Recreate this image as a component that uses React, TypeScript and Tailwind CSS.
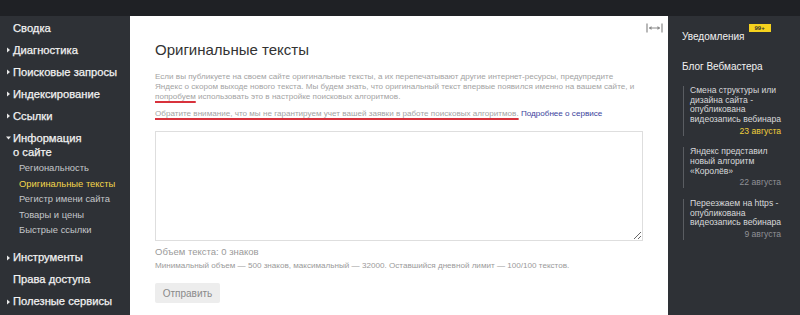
import React from "react";

const font = { fontFamily: '"Liberation Sans", Arial, sans-serif' };

function Tri({ down = false }: { down?: boolean }) {
  return (
    <svg width="5" height="6" viewBox="0 0 5 6" className="shrink-0">
      {down ? <path d="M0 1.5 L5 1.5 L2.5 4.5 Z" fill="#e8e8e8" /> : <path d="M1 0.5 L4 3 L1 5.5 Z" fill="#e8e8e8" />}
    </svg>
  );
}

function MainItem({ label, arrow = true }: { label: string; arrow?: boolean }) {
  return (
    <div className="h-[22px] flex items-center pl-[6px] gap-[2px] text-[11.2px] text-[#f2f2f2] [-webkit-text-stroke:0.25px_#f2f2f2]">
      <span className="w-[5px] flex">{arrow ? <Tri /> : null}</span>
      <span>{label}</span>
    </div>
  );
}

function SubItem({ label, active = false }: { label: string; active?: boolean }) {
  return (
    <div className={`pl-[19px] text-[9.4px] leading-[15.5px] ${active ? "text-[#f3d64b]" : "text-[#c4c6c9]"}`}>{label}</div>
  );
}

function BlogItem({ lines, date, hot = false }: { lines: string[]; date: string; hot?: boolean }) {
  return (
    <div className="ml-[15px] mr-[19px] border-l border-[#5a5d62] pl-[6px]">
      <div className="text-[8.6px] leading-[9.7px] text-[#d8d9db]">
        {lines.map((l, i) => (
          <div key={i} className="whitespace-nowrap">{l}</div>
        ))}
      </div>
      <div className={`text-right text-[8.6px] leading-[9.5px] mt-[2px] ${hot ? "text-[#f0cf3c]" : "text-[#8e9095]"}`}>{date}</div>
    </div>
  );
}

export default function App() {
  return (
    <div className="w-[800px] h-[315px] overflow-hidden bg-[#2e3136] flex flex-col" style={font}>
      <div className="h-[16px] bg-[#1f2125] shrink-0" />
      <div className="flex flex-1 min-h-0">
        {/* Sidebar */}
        <div className="w-[130px] shrink-0 bg-[#2e3136] pt-[1px]">
          <MainItem label="Сводка" arrow={false} />
          <MainItem label="Диагностика" />
          <MainItem label="Поисковые запросы" />
          <MainItem label="Индексирование" />
          <MainItem label="Ссылки" />
          <div className="pt-[4px] pl-[6px] flex gap-[2px] text-[11.2px] leading-[14px] text-[#f2f2f2] [-webkit-text-stroke:0.25px_#f2f2f2]">
            <span className="w-[5px] pt-[4px] flex items-start"><Tri down /></span>
            <span>Информация<br />о сайте</span>
          </div>
          <div className="pt-[1px]">
            <SubItem label="Региональность" />
            <SubItem label="Оригинальные тексты" active />
            <SubItem label="Регистр имени сайта" />
            <SubItem label="Товары и цены" />
            <SubItem label="Быстрые ссылки" />
          </div>
          <div className="mt-[9px]">
            <MainItem label="Инструменты" />
            <MainItem label="Права доступа" arrow={false} />
            <MainItem label="Полезные сервисы" />
          </div>
        </div>

        {/* Content */}
        <div className="w-[538px] shrink-0 bg-white relative px-[25px] pt-[24px]">
          <div className="absolute right-[5px] top-[7px]">
            <svg width="17" height="10" viewBox="0 0 17 10">
              <path d="M1 0.5 V9.5 M16 0.5 V9.5" stroke="#8a8a8a" strokeWidth="1.2" />
              <path d="M3 5 H14" stroke="#8a8a8a" strokeWidth="1" />
              <path d="M3 5 L5.5 3 V7 Z M14 5 L11.5 3 V7 Z" fill="#8a8a8a" />
            </svg>
          </div>
          <h1 className="text-[15px] leading-[20px] text-[#333]">Оригинальные тексты</h1>
          <div className="mt-[12px] text-[8.1px] leading-[10px] text-[#a3a3a3] whitespace-nowrap">
            <div>Если вы публикуете на своем сайте оригинальные тексты, а их перепечатывают другие интернет-ресурсы, предупредите</div>
            <div>Яндекс о скором выходе нового текста. Мы будем знать, что оригинальный текст впервые появился именно на вашем сайте, и</div>
            <div>
              <span className="underline decoration-[#d8323c] decoration-2 underline-offset-[2px]">попробуем</span> использовать это в настройке поисковых алгоритмов.
            </div>
          </div>
          <div className="mt-[7px] text-[8.1px] leading-[9px] whitespace-nowrap">
            <span className="text-[#a3a3a3] underline decoration-[#d8323c] decoration-2 underline-offset-[2px]">Обратите внимание, что мы не гарантируем учет вашей заявки в работе поисковых алгоритмов.</span>{" "}
            <span className="text-[#3a3f9c]">Подробнее о сервисе</span>
          </div>
          <textarea className="mt-[13px] block w-[488px] h-[110px] border border-[#dedede] resize-y outline-none" />
          <div className="mt-[5px] text-[9.5px] leading-[12px] text-[#9a9a9a]">Объем текста: 0 знаков</div>
          <div className="mt-[2px] text-[8.1px] leading-[12px] text-[#9a9a9a] whitespace-nowrap">
            Минимальный объем — 500 знаков, максимальный — 32000. Оставшийся дневной лимит — 100/100 текстов.
          </div>
          <button className="mt-[11px] w-[65px] h-[20px] bg-[#ededed] text-[10px] text-[#8a8a8a] rounded-[2px]">Отправить</button>
        </div>

        {/* Right panel */}
        <div className="flex-1 bg-[#2e3136] pt-[8px]">
          <div className="pl-[14px] flex items-start">
            <span className="mt-[6px] text-[10px] leading-[13px] text-[#f2f2f2]">Уведомления</span>
            <span className="ml-[4px] h-[8px] px-[6px] bg-[#f5d21e] text-[6px] leading-[8px] font-bold text-[#333]">99+</span>
          </div>
          <div className="pl-[14px] mt-[17px] text-[10px] leading-[13px] text-[#f2f2f2]">Блог Вебмастера</div>
          <div className="mt-[13px] flex flex-col gap-[11px]">
            <BlogItem lines={["Смена структуры или", "дизайна сайта -", "опубликована", "видеозапись вебинара"]} date="23 августа" hot />
            <BlogItem lines={["Яндекс представил", "новый алгоритм", "«Королёв»"]} date="22 августа" />
            <BlogItem lines={["Переезжаем на https -", "опубликована", "видеозапись вебинара"]} date="9 августа" />
          </div>
        </div>
      </div>
    </div>
  );
}
